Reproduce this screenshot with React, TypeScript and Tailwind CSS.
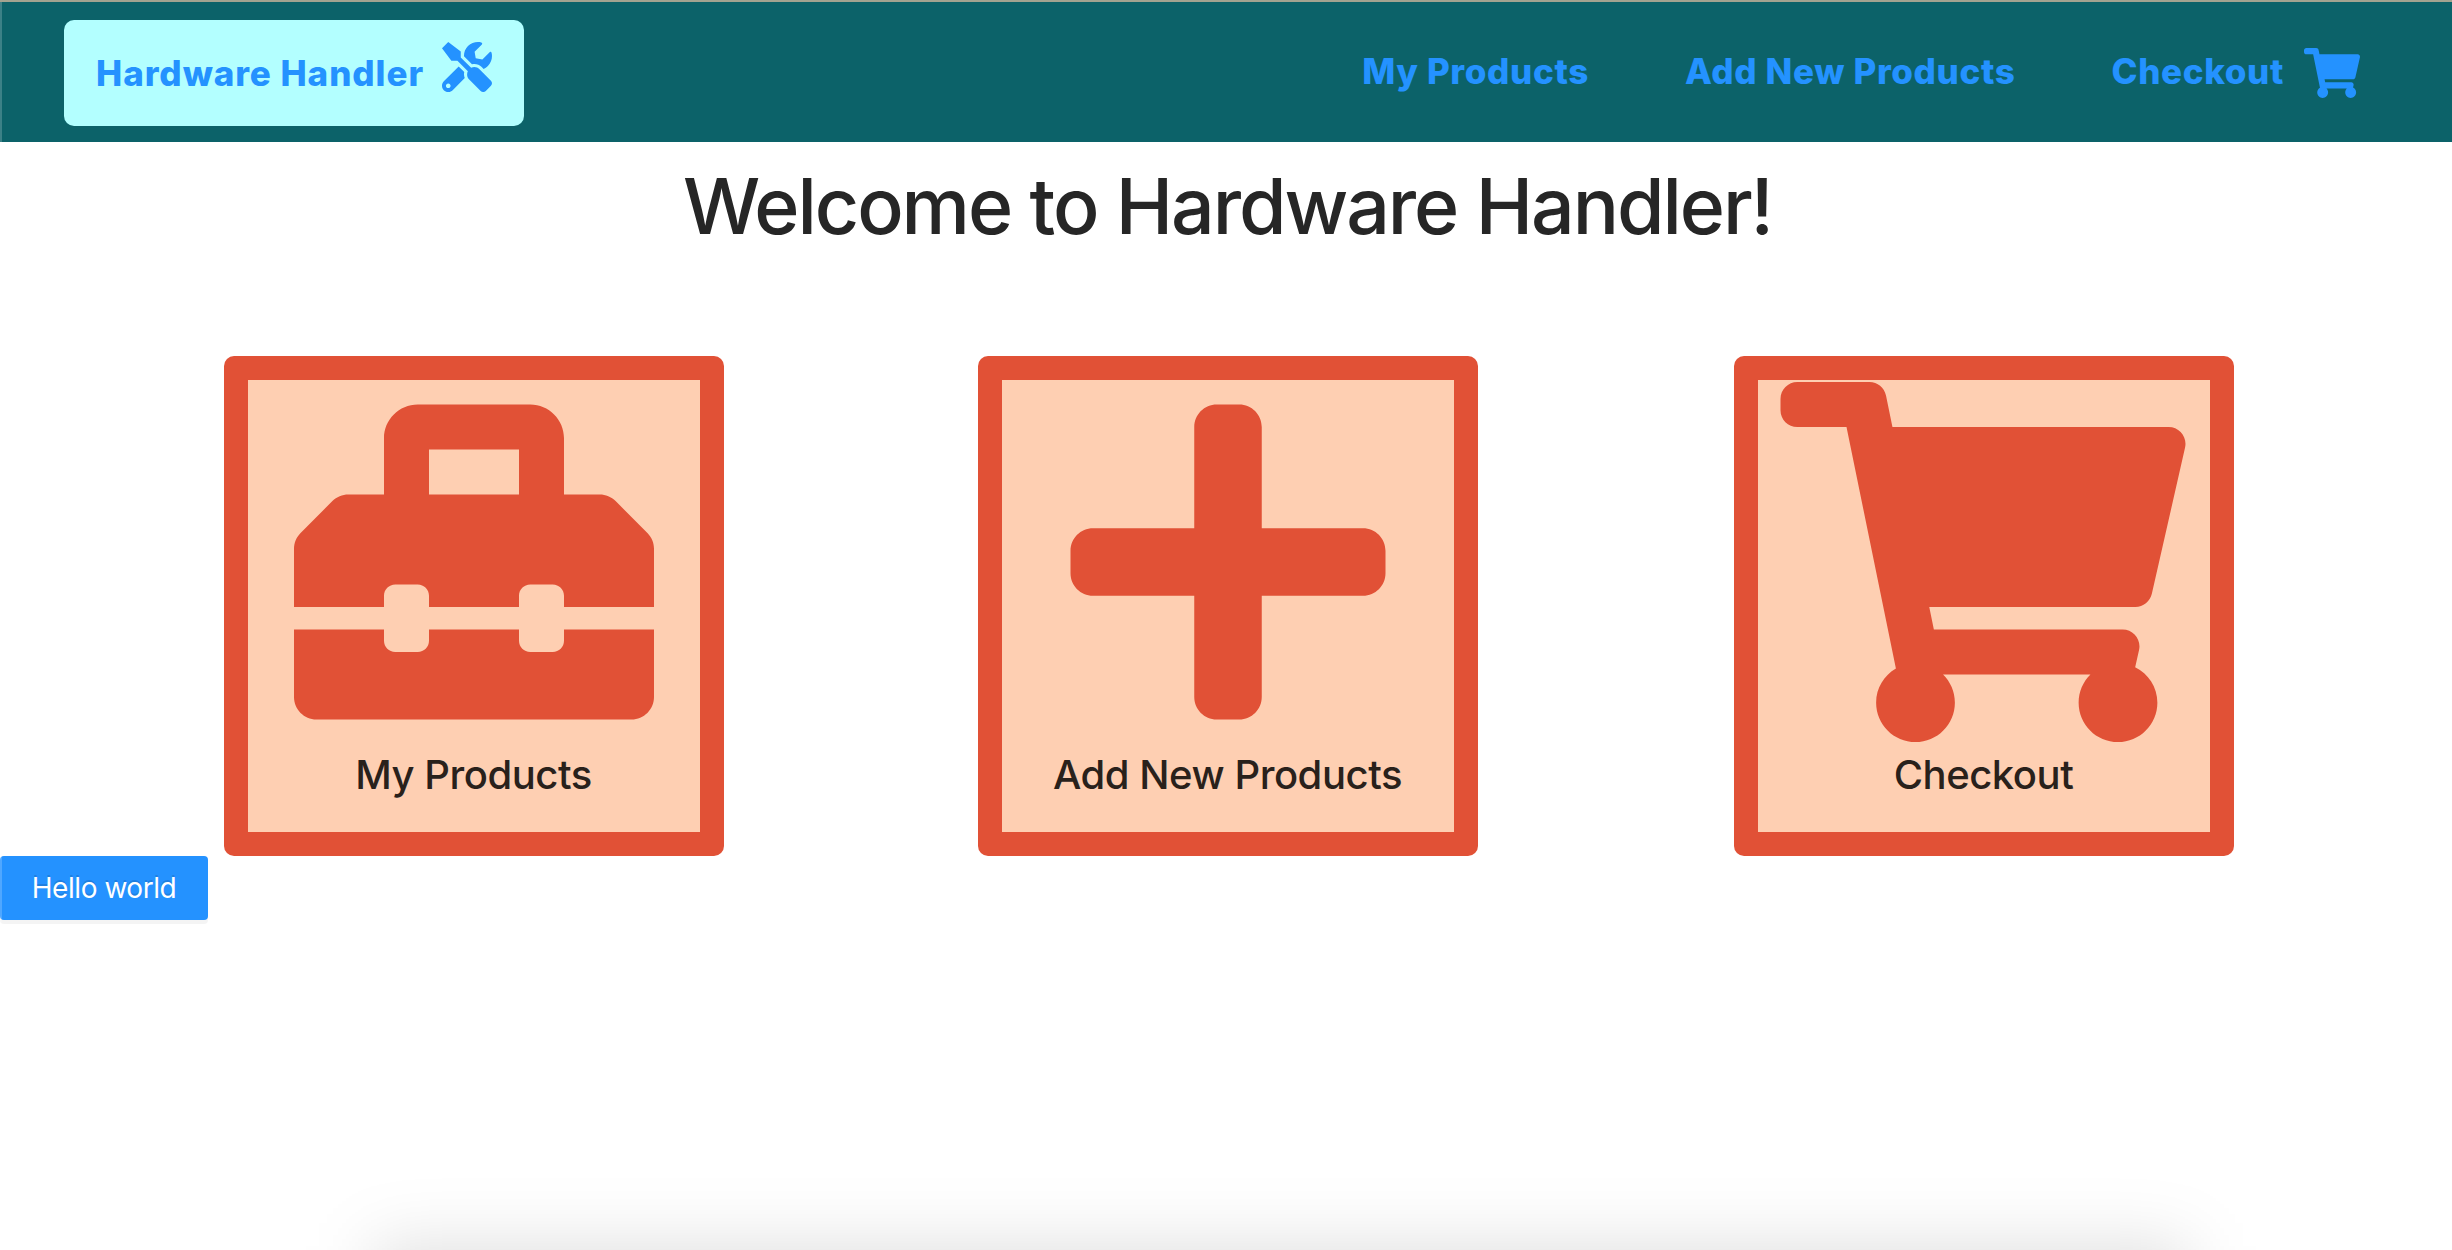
import type { ReactNode } from "react";
import { FaPlus, FaShoppingCart, FaToolbox, FaTools } from "react-icons/fa";

function NavLink({ children }: { children: ReactNode }) {
  return (
    <a className="flex items-center text-[35px] leading-[40px] font-extrabold tracking-[0.65px] whitespace-nowrap text-[#2492ff]">
      {children}
    </a>
  );
}

function Card({ label, icon, className }: { label: string; icon: ReactNode; className: string }) {
  return (
    <div
      className={`flex size-[500px] shrink-0 flex-col items-center rounded-[10px] bg-[#e15136] p-6 ${className}`}
    >
      <div className="flex size-[452px] flex-col items-center bg-[#fecfb2] pt-0.5 text-[#e15136]">
        {icon}
        <h2 className="mt-2.5 pr-px text-[40px] leading-[46px] font-medium tracking-[-0.45px] whitespace-nowrap text-[#29211b]">
          {label}
        </h2>
      </div>
    </div>
  );
}

export default function App() {
  return (
    <div className="relative h-[1250px] w-full overflow-hidden bg-white font-['Inter',sans-serif]">
      <header className="flex h-[142px] items-center border-t-2 border-[#a3a390] bg-[#0c6269] pr-[92px] pl-16">
        <div className="mt-0.5 flex h-[106px] w-[460px] items-center justify-between rounded-[10px] bg-[#b3ffff] px-8 text-[#2492ff]">
          <span className="text-[35px] leading-[40px] font-extrabold tracking-[0.95px] whitespace-nowrap">
            Hardware Handler
          </span>
          <FaTools className="mb-3 size-[50px]" />
        </div>
        <nav className="-mt-0.5 ml-auto flex items-center gap-24">
          <NavLink>My Products</NavLink>
          <NavLink>Add New Products</NavLink>
          <NavLink>
            Checkout
            <FaShoppingCart className="mt-1 ml-5 h-[50px] w-[56px]" />
          </NavLink>
        </nav>
      </header>

      <h1 className="pl-[3px] text-center text-[77px] leading-[128px] font-medium tracking-[-2.07px] text-[#262626]">
        Welcome to Hardware Handler!
      </h1>

      <main className="mt-[86px] flex">
        <Card className="ml-[224px]" label="My Products" icon={<FaToolbox className="size-[360px]" />} />
        <Card
          className="ml-[254px]"
          label="Add New Products"
          icon={<FaPlus className="h-[360px] w-[316px]" />}
        />
        <Card
          className="ml-[256px]"
          label="Checkout"
          icon={<FaShoppingCart className="mr-0.5 h-[360px] w-[406px]" />}
        />
      </main>

      <button className="flex h-16 w-[208px] items-center justify-center rounded-[4px] bg-[#2492ff] text-[28px] tracking-[-0.45px] text-white shadow-[0_4px_0_rgba(0,0,0,0.045)] [text-shadow:0_-2px_0_rgba(0,0,0,0.12)]">
        Hello world
      </button>

      {/* Light edge of the window and the shadow of the panel docked below it */}
      <div className="absolute top-0.5 left-0 h-[1248px] w-0.5 bg-white/20" />
      <div className="absolute top-[1246px] right-[264px] left-[374px] h-[300px] bg-black/13 blur-[34px]" />
    </div>
  );
}
